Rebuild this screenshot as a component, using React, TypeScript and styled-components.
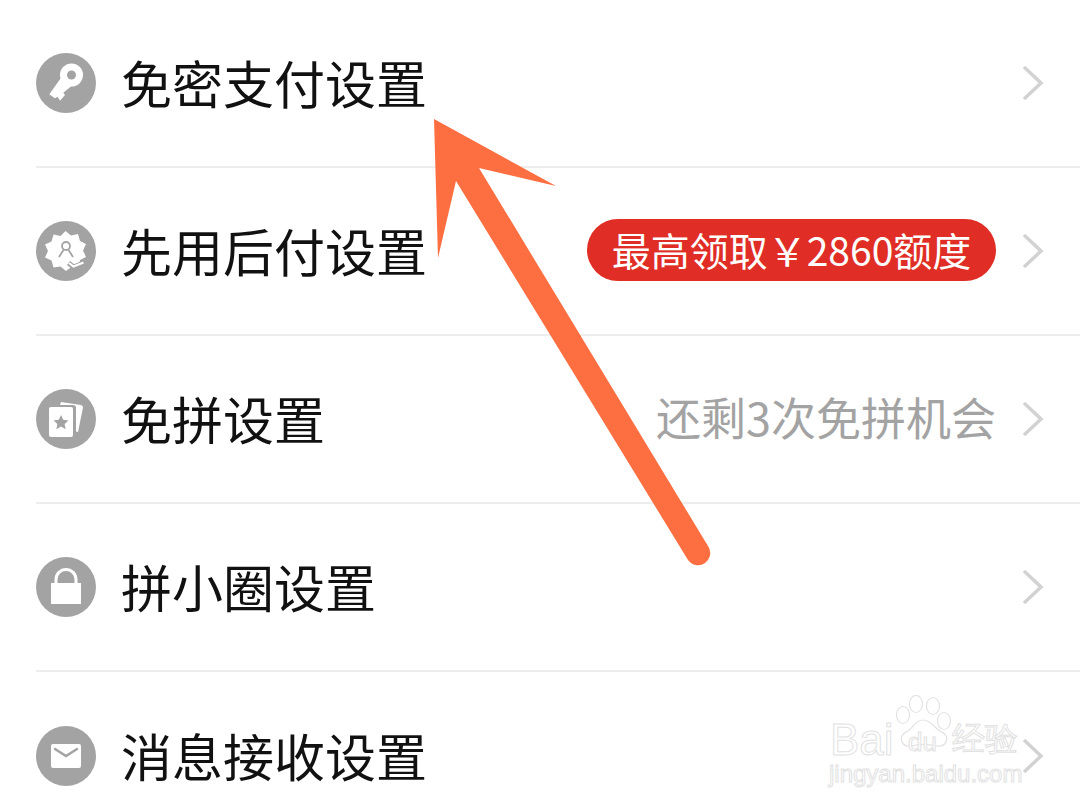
import React, {FC, ReactNode} from "react";
import styled, {createGlobalStyle} from "styled-components";

const GlobalStyle = createGlobalStyle`
    html, body {
        margin: 0;
        padding: 0;
        background: #ffffff;
        overflow: hidden;
    }
`;

const Page = styled.div`
    position: relative;
    width: 1080px;
    height: 810px;
    overflow: hidden;
    background: #ffffff;
    font-family: "Noto Sans CJK SC", "Noto Sans", sans-serif;
`;

const List = styled.div`
    display: flex;
    flex-direction: column;
    padding-left: 36px;
`;

const Row = styled.div`
    display: flex;
    align-items: center;
    box-sizing: border-box;
    height: 168px;
    padding-right: 36px;
    padding-bottom: 2px;
    border-bottom: 2px solid #ededed;

    &:last-child {
        border-bottom: none;
    }
`;

const IconCircle = styled.div`
    display: flex;
    align-items: center;
    justify-content: center;
    flex: none;
    width: 60px;
    height: 60px;
    margin-top: 2px;
    border-radius: 50%;
    background: #a3a3a3;
`;

const Label = styled.div`
    flex: 1;
    margin-left: 25px;
    padding-bottom: 1px;
    font-size: 51px;
    line-height: 60px;
    color: #111111;
    white-space: nowrap;
`;

const Hint = styled.div`
    padding-bottom: 3px;
    font-size: 45px;
    line-height: 60px;
    color: #a3a3a3;
    white-space: nowrap;
`;

const Badge = styled.div`
    display: flex;
    align-items: center;
    justify-content: center;
    box-sizing: border-box;
    width: 409px;
    height: 62px;
    padding-bottom: 3px;
    border-radius: 31px;
    background: #e02d25;
    color: #ffffff;
    font-size: 39px;
    white-space: nowrap;
`;

const Chevron = styled.svg`
    flex: none;
    width: 22px;
    height: 36px;
    margin-left: 26px;
    margin-top: 2px;
`;

const ArrowLayer = styled.svg`
    position: absolute;
    left: 0;
    top: 0;
    width: 1080px;
    height: 810px;
    pointer-events: none;
`;

const Watermark = styled.div`
    position: absolute;
    left: 828px;
    top: 692px;
    width: 200px;
    height: 100px;
    font-family: "Liberation Sans", sans-serif;
    pointer-events: none;
`;

const WatermarkPaw = styled.svg`
    position: absolute;
    left: 67px;
    top: 3px;
    width: 57px;
    height: 52px;
`;

const WatermarkWord = styled.span<{$left: number; $top: number; $size: number}>`
    position: absolute;
    left: ${p => p.$left}px;
    top: ${p => p.$top}px;
    font-size: ${p => p.$size}px;
    line-height: 1;
    white-space: nowrap;
    color: #ffffff;
    -webkit-text-stroke: 1px #e2e2e2;
`;

const Arrow: FC = () => (
    <ArrowLayer viewBox="0 0 1080 810">
        <path
            d="M434 119 L556 186 L479 168 L708 546 A12 12 0 0 1 688 560 L456 181 L438 258 Z"
            fill="#fd6e41"
        />
    </ArrowLayer>
);

const iconSvg = {width: 60, height: 60, viewBox: "0 0 60 60"};

const KeyIcon: FC = () => (
    <svg {...iconSvg}>
        <circle cx="35.500" cy="22" r="11.500" fill="#ffffff"/>
        <path d="M26 23.500 L13.300 41.300 L19 45.300 L21.700 43.700 L24 47.700 L29 42 L27.300 39.700 L38 31 Z" fill="#ffffff"/>
        <circle cx="35.500" cy="22" r="4.500" fill="#a3a3a3"/>
    </svg>
);

const BadgeIcon: FC = () => (
    <svg {...iconSvg}>
        <path
            d="M29.500 10 l5.500 4.500 7 -1.500 2 7 6 3 -3 6.500 3 6.500 -6 3 -1 7 -7 -.5 -6 4.500 -5.500 -4.500 -7 1 -2 -7 -6.500 -3 3 -6.500 -3 -6.500 6.500 -3 2 -7 7 1.500 Z"
            fill="#ffffff"
        />
        <circle cx="30" cy="25" r="4" fill="none" stroke="#a3a3a3" strokeWidth="1.800"/>
        <path d="M27.500 29 L23 36 M32.500 29 L37 36" fill="none" stroke="#a3a3a3" strokeWidth="1.800"/>
        <path d="M32.500 42 l5 4 10 -4" fill="none" stroke="#a3a3a3" strokeWidth="5"/>
        <path d="M33 42 l4.500 3.500 10 -4" fill="none" stroke="#ffffff" strokeWidth="2.200"/>
    </svg>
);

const CardsIcon: FC = () => (
    <svg {...iconSvg}>
        <path d="M25 13 L45 16 Q47 16.500 47 18.500 L42 43 L40 42.500 L40 19 Q40 16 37 16 L24 16 Z" fill="#ffffff"/>
        <rect x="13" y="18" width="24" height="30" rx="2" fill="#ffffff"/>
        <path
            d="M25 26 l2.200 4.800 5.300 .6 -3.900 3.500 1.100 5.300 -4.700 -2.700 -4.700 2.700 1.100 -5.300 -3.900 -3.500 5.300 -.6 Z"
            fill="#a3a3a3"
        />
    </svg>
);

const LockIcon: FC = () => (
    <svg {...iconSvg}>
        <path d="M20 27 V22.500 a10 10 0 0 1 20 0 V27" fill="none" stroke="#ffffff" strokeWidth="3"/>
        <rect x="15" y="26" width="30" height="21" fill="#ffffff"/>
    </svg>
);

const MailIcon: FC = () => (
    <svg {...iconSvg}>
        <rect x="15" y="18" width="30" height="24" rx="2" fill="#ffffff"/>
        <path d="M19 23 L30 30 L41 23" fill="none" stroke="#a3a3a3" strokeWidth="2.500" strokeLinecap="round"/>
    </svg>
);

const ChevronRight: FC = () => (
    <Chevron viewBox="0 0 22 36">
        <path d="M2 2 L19 18 L2 34" fill="none" stroke="#d2d2d2" strokeWidth="3.500"/>
    </Chevron>
);

const SettingRow: FC<{icon: ReactNode; label: string; children?: ReactNode}> = ({icon, label, children}) => (
    <Row>
        <IconCircle>{icon}</IconCircle>
        <Label>{label}</Label>
        {children}
        <ChevronRight/>
    </Row>
);

const App: FC = () => (
    <Page>
        <GlobalStyle/>
        <List>
            <SettingRow icon={<KeyIcon/>} label="免密支付设置"/>
            <SettingRow icon={<BadgeIcon/>} label="先用后付设置">
                <Badge>最高领取￥2860额度</Badge>
            </SettingRow>
            <SettingRow icon={<CardsIcon/>} label="免拼设置">
                <Hint>还剩3次免拼机会</Hint>
            </SettingRow>
            <SettingRow icon={<LockIcon/>} label="拼小圈设置"/>
            <SettingRow icon={<MailIcon/>} label="消息接收设置"/>
        </List>
        <Arrow/>
        <Watermark>
            <WatermarkPaw viewBox="0 0 57 52">
                <g fill="#ffffff" stroke="#e2e2e2" strokeWidth="1.200">
                    <ellipse cx="8" cy="20" rx="6.500" ry="8.500"/>
                    <ellipse cx="21" cy="9" rx="6.500" ry="8.500"/>
                    <ellipse cx="38" cy="11" rx="6.500" ry="8.500"/>
                    <ellipse cx="49" cy="26" rx="6.500" ry="8.500"/>
                    <path d="M28 25 C37 25 39 34 47 37 C55 42 52 52 42 51 C33 49 24 49 16 51 C6 52 3 42 11 37 C18 34 20 25 28 25 Z"/>
                </g>
            </WatermarkPaw>
            <WatermarkWord $left={2} $top={26} $size={44}>Bai</WatermarkWord>
            <WatermarkWord $left={80} $top={37} $size={26}>du</WatermarkWord>
            <WatermarkWord $left={124} $top={30} $size={33}>经验</WatermarkWord>
            <WatermarkWord $left={1} $top={70} $size={24}>jingyan.baidu.com</WatermarkWord>
        </Watermark>
    </Page>
);

export default App;
